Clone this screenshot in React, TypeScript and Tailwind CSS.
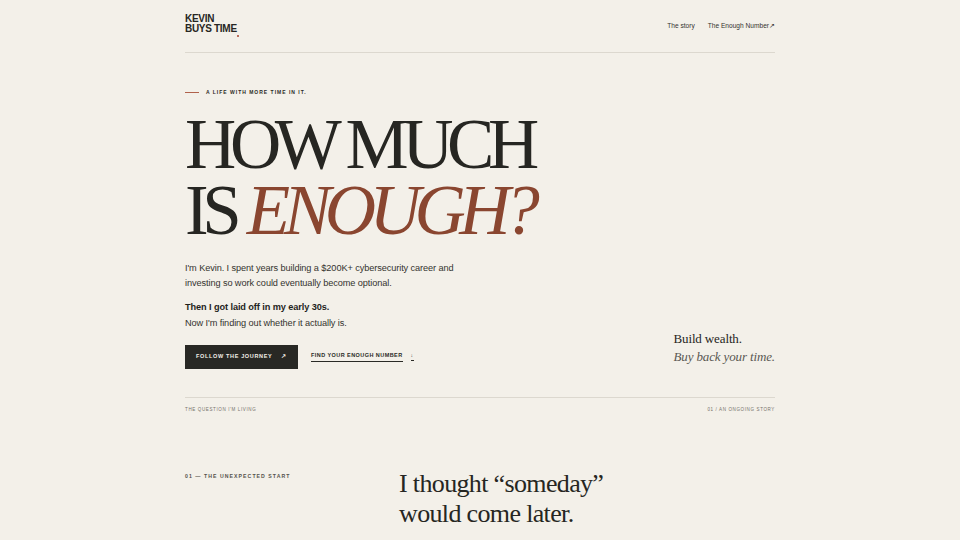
import React from 'react';

const serif = { fontFamily: '"Liberation Serif", "Times New Roman", serif' };

function Header() {
  return (
    <header className="flex items-start justify-between border-b border-[#dcd8cf] pt-[14px] h-[53px]">
      <a className="relative block text-[10px] leading-[10px] font-bold tracking-[-0.03em] text-[#262622] uppercase">
        Kevin
        <br />
        Buys Time
        <span className="absolute left-[52px] top-[21px] h-[2px] w-[2px] rounded-full bg-[#a8452f]" />
      </a>
      <nav className="flex items-center gap-[13px] pt-[7px] text-[6.6px] text-[#33332f]">
        <a>The story</a>
        <a>The Enough Number↗</a>
      </nav>
    </header>
  );
}

function Hero() {
  return (
    <section className="pt-[36px]">
      <div className="flex items-center gap-[7px]">
        <span className="h-px w-[14px] bg-[#b0624c]" />
        <span className="text-[5px] font-bold uppercase tracking-[0.2em] text-[#2a2a26]">
          A life with more time in it.
        </span>
      </div>
      <h1
        className="mt-[14px] text-[71px] leading-[66px] tracking-[-0.09em] text-[#262622]"
        style={serif}
      >
        HOW MUCH
        <br />
        IS <em className="text-[#8a4630]">ENOUGH?</em>
      </h1>
      <div className="mt-[18px] w-[290px] text-[9.2px] leading-[15px] tracking-[-0.01em] text-[#33332f]">
        <p>
          I'm Kevin. I spent years building a $200K+ cybersecurity career and investing so work
          could eventually become optional.
        </p>
        <p className="mt-[9px] font-bold text-[#1f1f1c]">Then I got laid off in my early 30s.</p>
        <p className="mt-[1px]">Now I'm finding out whether it actually is.</p>
      </div>
      <div className="-mt-[1px] flex items-end justify-between">
        <div className="flex items-center gap-[13px]">
          <a className="flex h-[24px] w-[113px] items-center justify-between bg-[#282824] px-[11px] text-[5.5px] font-bold uppercase tracking-[0.12em] text-[#f3f0e9]">
            <span>Follow the journey</span>
            <span className="text-[6px]">↗</span>
          </a>
          <a className="flex items-center gap-[8px] text-[5.5px] font-bold uppercase tracking-[0.08em] text-[#2a2a26]">
            <span className="border-b border-[#2a2a26] pb-[1px]">Find your Enough Number</span>
            <span className="border-b border-[#2a2a26] pb-[1px] text-[5px]">↓</span>
          </a>
        </div>
        <div className="pb-[3px] text-[13px] leading-[18px] tracking-[-0.01em]" style={serif}>
          <p className="text-[#262622]">Build wealth.</p>
          <p className="italic text-[#5a5853]">Buy back your time.</p>
        </div>
      </div>
      <div className="mt-[28px] flex justify-between border-t border-[#dcd8cf] pt-[9px] text-[4.5px] uppercase tracking-[0.14em] text-[#75726b]">
        <span>The question I'm living</span>
        <span>01 / An ongoing story</span>
      </div>
    </section>
  );
}

function Story() {
  return (
    <section className="mt-[56px] grid grid-cols-[214px_1fr]">
      <p className="pt-[4px] text-[5.2px] font-bold uppercase tracking-[0.2em] text-[#55534d]">
        01 — The unexpected start
      </p>
      <h2 className="text-[26px] leading-[30px] tracking-[-0.025em] text-[#262622]" style={serif}>
        I thought “someday”
        <br />
        would come later.
      </h2>
    </section>
  );
}

export default function App() {
  return (
    <div
      className="min-h-screen bg-[#f3f0e9]"
      style={{ fontFamily: '"Liberation Sans", Arial, sans-serif' }}
    >
      <div className="mx-auto w-[590px]">
        <Header />
        <Hero />
        <Story />
      </div>
    </div>
  );
}
